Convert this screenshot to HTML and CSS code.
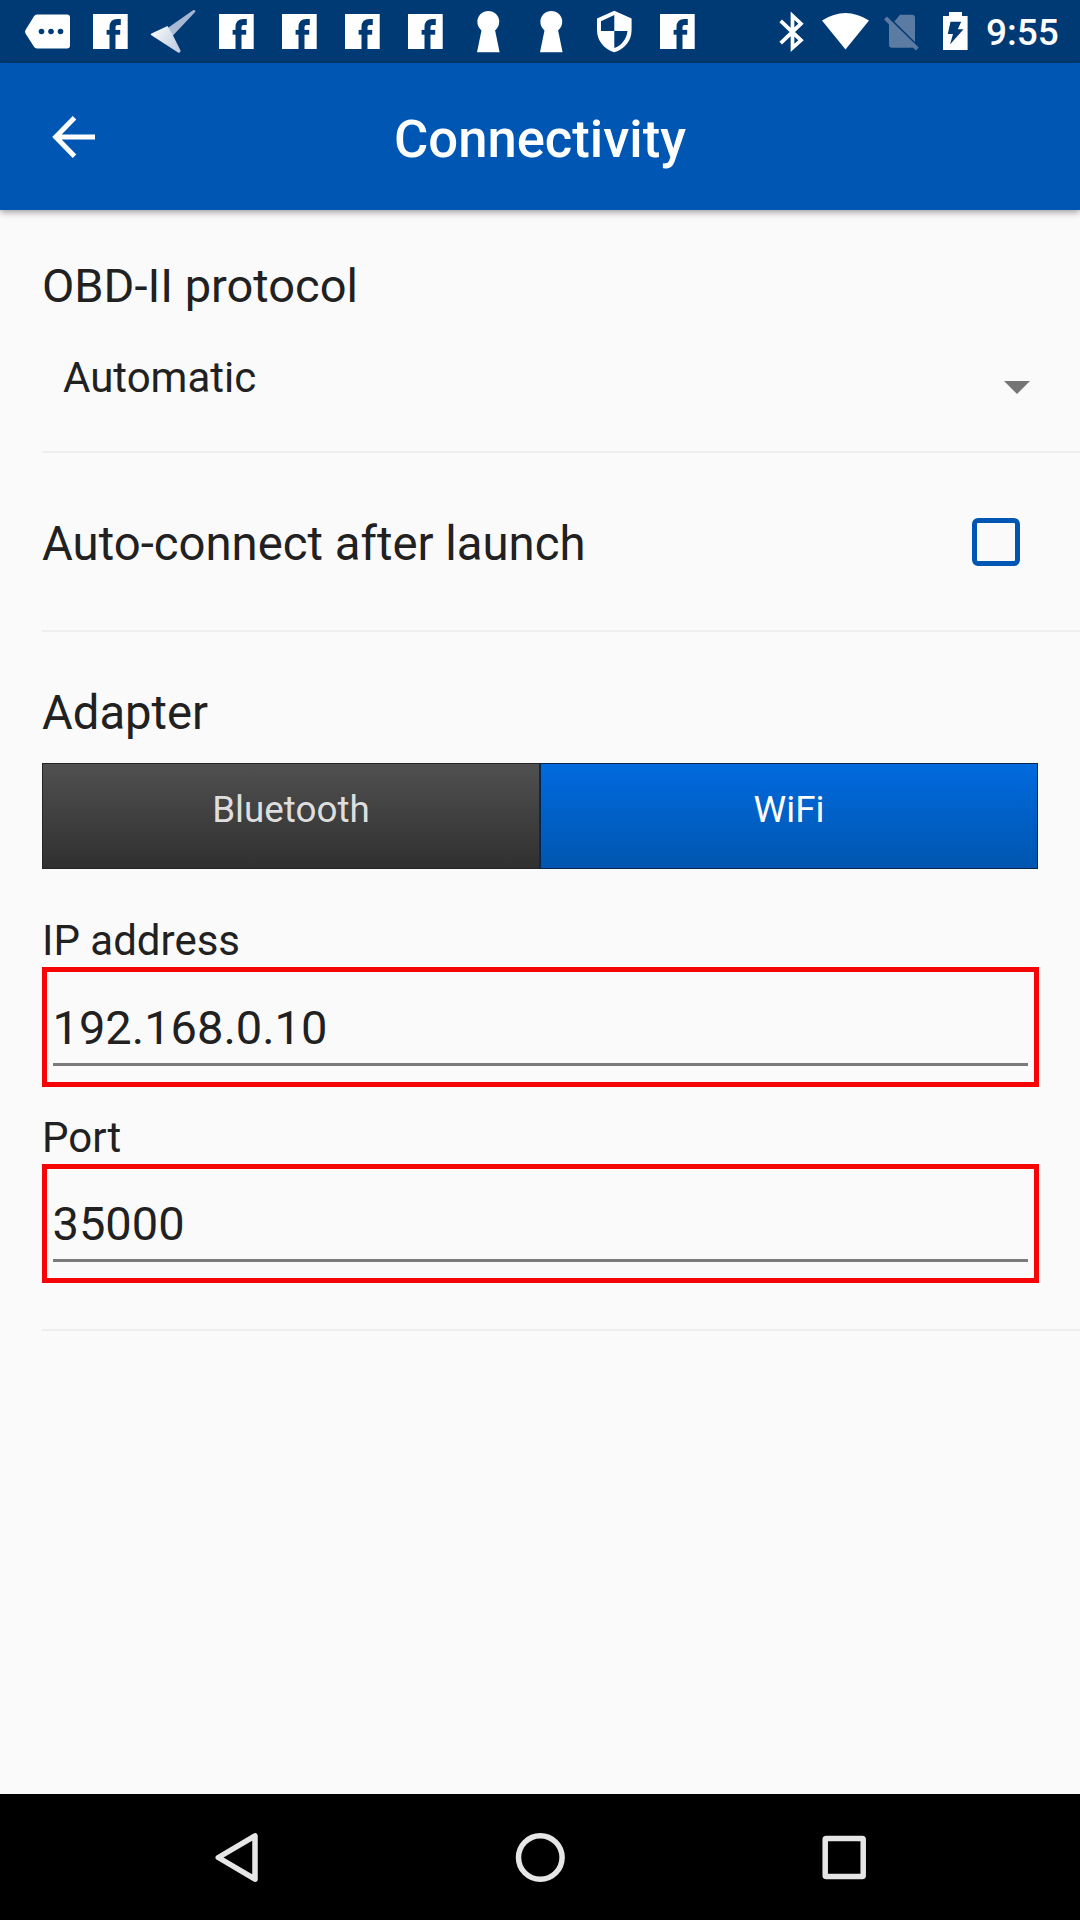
FILE: index.html
```html
<!DOCTYPE html>
<html lang="en">
<head>
<meta charset="utf-8">
<title>Connectivity</title>
<link rel="stylesheet" href="styles.css">
</head>
<body>
<svg class="defs" width="0" height="0">
  <defs>
    <linearGradient id="wing" x1="1" y1="0" x2="0" y2="1"><stop offset="0" stop-color="#9fb3d0"/><stop offset="1" stop-color="#aebdd6"/></linearGradient>
    <linearGradient id="tail" x1="0" y1="0" x2="1" y2="0.6"><stop offset="0" stop-color="#fff"/><stop offset="1" stop-color="#c3cfe1"/></linearGradient>
    <symbol id="fb" viewBox="0 0 63 63">
      <path fill="#fff" d="M14 14h34.700v35H14z"/>
      <path class="cut-line" stroke-width="6" d="M41.800 21.900h-3.300q-5 0-5 5.200V49"/>
      <path class="cut-line" stroke-width="4.800" d="M27.600 32.300h13.600"/>
    </symbol>
    <symbol id="key" viewBox="0 0 63 63">
      <circle cx="31.300" cy="21.800" r="10.900" fill="#fff"/>
      <path fill="#fff" d="M25 28h12.600l5 24.200h-22.600z"/>
    </symbol>
  </defs>
</svg>
<div class="screen">
  <div class="status">
    <div class="notifications">
      <svg class="slot" viewBox="0 0 63 63"><path fill="#fff" d="M21 14.500h30q3 0 3 3v28q0 3-3 3H21q-2 0-3-1.700L9.500 33.500q-1-1.800 0-3.600L18 16.200q1-1.700 3-1.700z"/><g class="cut"><circle cx="25.500" cy="31.500" r="2.800"/><circle cx="35" cy="31.500" r="2.800"/><circle cx="44.500" cy="31.500" r="2.800"/></g></svg>
      <svg class="slot"><use href="#fb"/></svg>
      <svg class="slot" viewBox="0 0 63 63"><path fill="url(#wing)" d="M25 28.500 51 10.300q2.500-.8 2.400 1.500L30.500 36z"/><path fill="url(#tail)" d="M9 35q-.8-.8.500-1.500L25.500 26 31 35.500l7.500 15q0 3-2.500 2z"/></svg>
      <svg class="slot"><use href="#fb"/></svg>
      <svg class="slot"><use href="#fb"/></svg>
      <svg class="slot"><use href="#fb"/></svg>
      <svg class="slot"><use href="#fb"/></svg>
      <svg class="slot"><use href="#key"/></svg>
      <svg class="slot"><use href="#key"/></svg>
      <svg class="slot" viewBox="583 0 63 63"><path fill="#fff" d="M614.300 10.800 631.600 18.500V30c0 11-7.200 19.200-17.300 22.300C604.200 49.200 597 41 597 30V18.500z"/><path class="cut" d="M614.300 15v16H601v-9.800zM614.300 31h13.200c-.9 8-6 14.500-13.200 17z"/></svg>
      <svg class="slot"><use href="#fb"/></svg>
    </div>
    <div class="system">
      <svg width="45" height="63" viewBox="768 0 45 63"><path fill="none" stroke="#fff" stroke-width="3.700" d="M780.700 20.800 801 40.300l-8.500 7.500V15.700l8.500 8-20.300 19.500"/></svg>
      <svg width="63" height="63" viewBox="813 0 63 63"><path fill="#fff" d="M822 20.500q23.500-15 47 0L845.500 49.500z"/></svg>
      <svg width="54" height="63" viewBox="876 0 54 63"><path fill="#5b7ba2" d="M900 14.700h12q3 0 3 3V42L894.300 21.400zM889 21.500 914.500 46q-.5 1.700-2.500 1.700h-20q-3 0-3-3z"/><path stroke="#5b7ba2" stroke-width="4" d="m885.500 18 31.800 31"/></svg>
      <svg width="51" height="63" viewBox="930 0 51 63"><path fill="#fff" d="M949 12h13v4h5.600v34H943V16h6z"/><path class="cut" d="M950.500 21.700h10.700l-3.400 7.500h5.700L950 44.500l3-10.500h-5.200z"/></svg>
      <span class="clock">9:55</span>
    </div>
  </div>

  <header class="appbar">
    <svg class="back" viewBox="0 0 44 44"><path fill="none" stroke="#fff" stroke-width="5" d="M43 22H4.500M22.500 2.800 3.700 22l18.800 19.200"/></svg>
    <h1>Connectivity</h1>
  </header>

  <main>
    <section class="protocol">
      <h2>OBD-II protocol</h2>
      <div class="select"><span>Automatic</span><svg width="26" height="13" viewBox="0 0 26 13"><path fill="#757575" d="M0 0h26L13 13z"/></svg></div>
    </section>
    <section class="auto">
      <h2>Auto-connect after launch</h2>
      <span class="checkbox"></span>
    </section>
    <section class="adapter">
      <h2>Adapter</h2>
      <div class="segments"><button class="seg">Bluetooth</button><button class="seg on">WiFi</button></div>
      <label class="ip-label">IP address</label>
      <div class="field"><div class="value">192.168.0.10</div></div>
      <label class="port-label">Port</label>
      <div class="field short"><div class="value">35000</div></div>
    </section>
  </main>

  <nav>
    <svg viewBox="0 0 64 64"><path d="M51 10.800v43.400L14.300 32.500z"/></svg>
    <svg viewBox="0 0 64 64"><circle cx="32.300" cy="32.500" r="21.800"/></svg>
    <svg viewBox="0 0 64 64"><rect x="13.200" y="13.500" width="38" height="38" rx="1"/></svg>
  </nav>
</div>
</body>
</html>
```
FILE: styles.css
```css
* { box-sizing: border-box; }
body { margin: 0; background: #fafafa; color: #212121; font-family: Roboto, "Liberation Sans", sans-serif; }
svg { display: block; flex: none; }
.defs { position: absolute; }
.screen { display: flex; flex-direction: column; width: 1080px; height: 1920px; }

.status { display: flex; justify-content: space-between; height: 63px; padding: 0 20px 0 16px; background: #003a75; }
.notifications, .system { display: flex; }
.slot { width: 63px; height: 63px; }
.cut { fill: #003a75; }
.cut-line { fill: none; stroke: #003a75; }
.clock { width: 79px; padding-left: 5px; color: #fff; font-size: 37px; line-height: 66px; font-weight: 500; white-space: nowrap; }

.appbar { display: grid; grid-template-columns: 150px 1fr 150px; align-items: center; height: 147px; background: #0057b3; box-shadow: 0 2px 7px rgba(0, 0, 0, .4); z-index: 1; }
.back { width: 44px; height: 44px; margin-left: 52px; }
h1 { margin: 5px 0 0; color: #fff; font-size: 52.6px; line-height: 60px; font-weight: 500; text-align: center; }

main { flex: 1; padding-left: 42px; }
section { border-bottom: 2px solid #eeeeee; }
h2 { margin: 0; font-size: 47.2px; line-height: 56px; font-weight: 400; }
.protocol { height: 243px; padding-top: 48px; }
.protocol h2 { font-size: 47px; }
.select { display: flex; justify-content: space-between; margin: 39px 50px 0 21px; font-size: 42px; line-height: 50px; }
.select svg { margin-top: 28px; }
.auto { display: flex; justify-content: space-between; align-items: center; height: 179px; padding-right: 60px; }
.auto h2 { padding-top: 4px; font-size: 47.3px; }
.checkbox { width: 48px; height: 48px; border: 5px solid #0057b3; border-radius: 6px; }
.adapter { height: 699px; padding: 53px 42px 0 0; }
.segments { display: grid; grid-template-columns: 1fr 1fr; height: 106px; margin-top: 22px; }
.seg { height: 106px; padding: 0 0 12px; border: 1px solid #252525; background: linear-gradient(#505050, #303030); color: #dedede; font: 400 36.8px/44px Roboto, "Liberation Sans", sans-serif; }
.seg.on { border-color: #06264a; background: linear-gradient(#006ade, #0056b0); color: #fff; }
label { display: block; font-size: 42px; line-height: 48px; }
.ip-label { margin: 48px 0 2px; }
.port-label { margin: 27px 0 2px; }
.field { width: 997px; height: 120px; padding: 23px 6px 0 5.5px; border: 5px solid #f50505; }
.field.short { height: 119px; padding-top: 22px; }
.value { height: 71px; border-bottom: 3px solid #7b7b7b; font-size: 47px; line-height: 65px; }

nav { display: flex; justify-content: center; align-items: center; gap: 240px; height: 126px; background: #000; }
nav svg { width: 64px; height: 64px; fill: none; stroke: #e6e6e6; stroke-width: 5.5; stroke-linejoin: round; }
```
